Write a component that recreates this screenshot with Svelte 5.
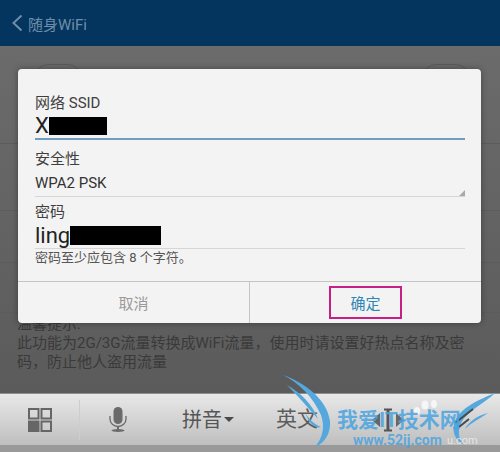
<script lang="ts">
  const rowHeights = [98, 67, 52, 50];
</script>

<div class="screen">
  <header class="topbar">
    <svg class="back" width="12" height="18" viewBox="0 0 12 18"><path d="M10.5 1.5 L2.5 9 L10.5 16.5" fill="none" stroke="#6f8ea8" stroke-width="2" /></svg>
    <span class="title">随身WiFi</span>
  </header>

  <main class="page">
    <div class="pills">
      <span class="pill"></span>
      <span class="pill"></span>
    </div>
    {#each rowHeights as h}
      <div class="row" style="height: {h}px"></div>
    {/each}
    <div class="tips">
      <p>温馨提示:</p>
      <p>此功能为2G/3G流量转换成WiFi流量，使用时请设置好热点名称及密<br />码，防止他人盗用流量</p>
    </div>
  </main>

  <div class="toolbar">
    <div class="tool grid-tool">
      <svg width="24" height="24" viewBox="0 0 24 24">
        <path d="M1 1h9.5v9.5h-9.5z M13.5 1h9.5v9.5h-9.5z M13.5 13.5h9.5v9.5h-9.5z" fill="none" stroke="#666" stroke-width="2" />
        <rect x="0" y="12.5" width="11.5" height="11.5" fill="#666" />
      </svg>
    </div>
    <span class="sep"></span>
    <div class="tool mic">
      <svg width="18" height="25" viewBox="0 0 18 25">
        <rect x="4.5" y="0" width="9" height="17" rx="4.5" fill="#6a6a6a" />
        <path d="M1 9 v3 a8 7.5 0 0 0 16 0 v-3" fill="none" stroke="#6a6a6a" stroke-width="1.3" />
        <path d="M9 19 v4" stroke="#6a6a6a" stroke-width="2" />
        <ellipse cx="9" cy="23.5" rx="6.5" ry="1.5" fill="#6a6a6a" />
      </svg>
    </div>
    <div class="key pinyin">拼音<i class="caret"></i></div>
    <div class="key english">英文</div>
    <div class="cursor-key">
      <svg width="32" height="24" viewBox="0 0 32 24">
        <path d="M8 5 L0 12 L8 19Z" fill="#666" />
        <path d="M24 5 L32 12 L24 19Z" fill="#666" />
        <path d="M12 1.5 H20 M12 22.5 H20" stroke="#555" stroke-width="2" />
        <path d="M16 1.5 V22.5" stroke="#555" stroke-width="3" />
      </svg>
    </div>
  </div>
  <div class="strip"></div>

  <div class="dialog">
    <div class="form">
      <label class="cap" for="ssid">网络 SSID</label>
      <div class="input active" id="ssid">
        <span class="val">X</span><span class="mask ssid-mask"></span>
      </div>

      <span class="cap second">安全性</span>
      <div class="select">
        <span>WPA2 PSK</span>
        <i class="corner"></i>
      </div>

      <label class="cap third" for="pw">密码</label>
      <div class="input" id="pw">
        <span class="val">ling</span><span class="mask pw-mask"></span>
      </div>
      <p class="hint">密码至少应包含 8 个字符。</p>
    </div>
    <div class="actions">
      <button type="button" class="cancel">取消</button>
      <button type="button" class="ok"><span class="ok-box">确定</span></button>
    </div>
  </div>

  <div class="watermark">
    <svg width="217" height="77" viewBox="0 0 217 77" fill="none">
      <path d="M0 0 C22 8 44 24 47 46 C48 58 42 68 32 72 C40 62 42 52 38 40 C30 22 16 8 0 0Z" fill="#55a8de" />
      <path d="M4 10 C18 18 30 30 35 44 C26 34 16 22 4 10Z" fill="#55a8de" />
      <path d="M22 38 C26 44 32 50 38 52 C32 54 26 48 22 38Z" fill="#55a8de" />
      <path d="M212 18 C202 28 184 36 178 48 C174 58 176 66 182 70 C172 66 168 56 172 46 C178 32 198 24 212 18Z" fill="#55a8de" />
      <path d="M205 38 C196 44 188 48 182 54 C186 46 196 40 205 38Z" fill="#55a8de" />
      <g fill="#f4f6f8">
        <ellipse cx="142" cy="30" rx="3.5" ry="4.5" />
        <ellipse cx="151" cy="29" rx="3" ry="4" />
        <ellipse cx="134" cy="36" rx="3" ry="4" />
      </g>
      <path d="M172 48 L190 34 M176 52 L186 44" stroke="#4a4a4a" stroke-width="2" />
    </svg>
    <span class="wm-title">我爱IT技术网</span>
    <span class="wm-url">www.52ij.com</span>
    <span class="wm-baidu">u.com</span>
  </div>
</div>

<style>
  :global(body) {
    margin: 0;
    background: #5e5e5e;
  }

  .screen {
    position: relative;
    display: flex;
    flex-direction: column;
    width: 500px;
    height: 452px;
    overflow: hidden;
    font-family: "Roboto", "Noto Sans CJK SC", sans-serif;
  }

  .topbar {
    display: flex;
    align-items: center;
    gap: 5px;
    height: 46px;
    padding-left: 11px;
    background: #03355f;
    flex: none;
  }

  .title {
    font-size: 15px;
    color: #6f8ea8;
  }

  .page {
    position: relative;
    flex: 1;
    display: flex;
    flex-direction: column;
    background: linear-gradient(#6b6b6b, #5b5b5b);
    min-height: 0;
  }

  .pills {
    position: absolute;
    left: 34px;
    right: 30px;
    top: 18px;
    display: flex;
    justify-content: space-between;
  }

  .pill {
    width: 46px;
    height: 30px;
    border: 1px solid #5a5a5a;
    border-radius: 14px;
  }

  .row {
    box-sizing: border-box;
    border-bottom: 1px solid #5c5c5c;
    flex: none;
  }

  .tips {
    padding: 2px 0 0 17px;
    font-size: 15px;
    line-height: 19px;
    white-space: nowrap;
    color: #3a3a3a;
  }

  .tips p {
    margin: 0;
  }

  .toolbar {
    display: flex;
    align-items: center;
    height: 52px;
    flex: none;
    background: linear-gradient(#e8e8e8, #bfbfbf);
    box-sizing: border-box;
    border-top: 1px solid #8e8e8e;
    color: #565656;
  }

  .strip {
    height: 7px;
    flex: none;
    background: #999;
  }

  .tool {
    display: flex;
    align-items: center;
    justify-content: center;
  }

  .grid-tool {
    width: 79px;
  }

  .sep {
    width: 1px;
    height: 40px;
    background: #cdcdcd;
  }

  .mic {
    width: 76px;
  }

  .key {
    font-size: 20px;
    line-height: 1;
  }

  .pinyin {
    display: flex;
    align-items: center;
    width: 94px;
    margin-left: 26px;
  }

  .caret {
    margin-left: 2px;
    border: 5px solid transparent;
    border-top-color: #4a4a4a;
    border-bottom: 0;
  }

  .english {
    width: 96px;
    font-size: 21px;
    color: #5c5c5c;
  }

  .cursor-key {
    display: flex;
    align-items: center;
  }

  .dialog {
    position: absolute;
    left: 18px;
    top: 69px;
    width: 463px;
    height: 254px;
    display: flex;
    flex-direction: column;
    background: #f3f3f3;
    border-radius: 4px;
    box-shadow: 0 0 6px rgba(0, 0, 0, 0.35);
    overflow: hidden;
  }

  .form {
    flex: 1;
    padding: 24px 16px 0 17px;
    display: flex;
    flex-direction: column;
  }

  .cap {
    font-size: 15px;
    line-height: 20px;
    color: #3f3f3f;
  }

  .second {
    margin-top: 9px;
  }

  .third {
    margin-top: 5px;
  }

  .input {
    display: flex;
    align-items: center;
    height: 26px;
    border-bottom: 1px solid #d6d6d6;
  }

  .input.active {
    height: 27px;
    box-sizing: border-box;
    border-bottom: 2px solid #6f9dc2;
  }

  .val {
    font-size: 22px;
    color: #222;
  }

  .mask {
    height: 18px;
    background: #000;
  }

  .ssid-mask {
    width: 58px;
  }

  .pw-mask {
    width: 91px;
    height: 19px;
  }

  .select {
    position: relative;
    height: 28px;
    box-sizing: border-box;
    padding-top: 5px;
    font-size: 15px;
    color: #333;
    border-bottom: 1px solid #d6d6d6;
  }

  .corner {
    position: absolute;
    right: 0;
    bottom: 0;
    border-left: 6px solid transparent;
    border-bottom: 6px solid #a8a8a8;
  }

  .hint {
    margin: 0;
    font-size: 13px;
    line-height: 18px;
    color: #555;
  }

  .actions {
    display: flex;
    height: 41px;
    border-top: 1px solid #c4c4c4;
    flex: none;
  }

  .actions button {
    flex: 1;
    background: none;
    border: 0;
    padding: 0;
    font: inherit;
    font-size: 15px;
  }

  .cancel {
    color: #9a9a9a;
    border-right: 1px solid #c4c4c4 !important;
  }

  .ok {
    color: #2f86b4;
    display: flex;
    align-items: center;
    justify-content: center;
  }

  .ok-box {
    display: flex;
    align-items: center;
    justify-content: center;
    width: 73px;
    height: 33px;
    border: 2px solid #c71f83;
    box-sizing: border-box;
  }

  .watermark {
    position: absolute;
    left: 283px;
    top: 375px;
    width: 217px;
    height: 77px;
  }

  .watermark svg {
    position: absolute;
    left: 0;
    top: 0;
  }

  .wm-title {
    position: absolute;
    left: 54px;
    top: 34px;
    font-size: 21px;
    line-height: 22px;
    font-weight: 700;
    white-space: nowrap;
    color: rgba(74, 163, 224, 0.85);
  }

  .wm-url {
    position: absolute;
    left: 70px;
    top: 59px;
    font-size: 14px;
    line-height: 13px;
    font-weight: 700;
    white-space: nowrap;
    color: rgba(74, 163, 224, 0.85);
  }

  .wm-baidu {
    position: absolute;
    left: 164px;
    top: 59px;
    font-size: 11px;
    line-height: 13px;
    white-space: nowrap;
    color: rgba(240, 240, 240, 0.8);
  }
</style>
